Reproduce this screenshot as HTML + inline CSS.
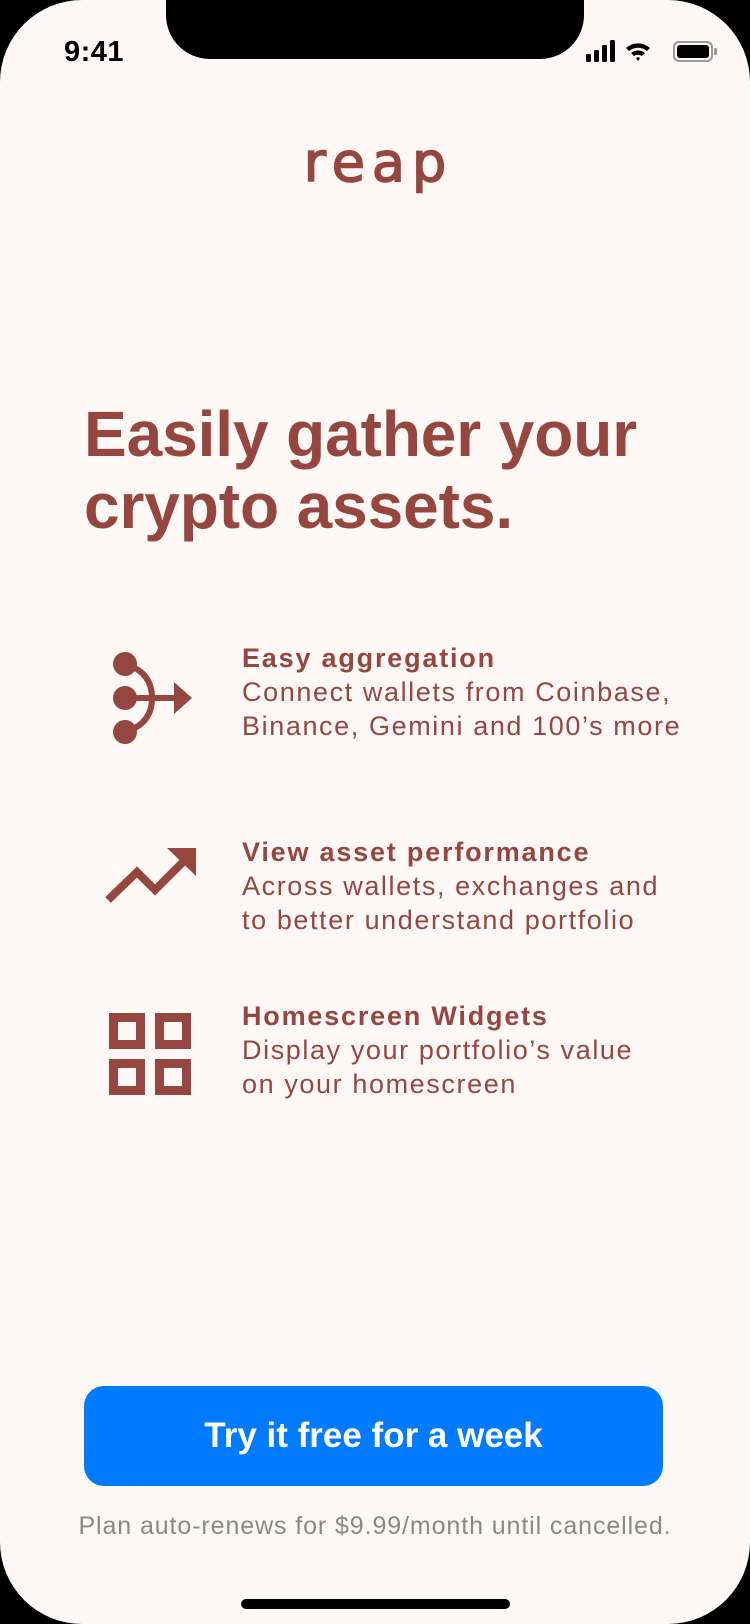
<!DOCTYPE html>
<html><head><meta charset="utf-8"><style>
html,body{margin:0;padding:0;background:#000;}
body{width:750px;height:1624px;position:relative;overflow:hidden;font-family:"Liberation Sans",sans-serif;}
.screen{position:absolute;left:0;top:0;width:750px;height:1624px;background:#fdf8f6;border-radius:82px;}
.notch{position:absolute;left:166px;top:0;width:418px;height:59px;background:#000;border-radius:0 0 44px 44px;}
.time{position:absolute;left:64px;top:36px;font-size:29px;font-weight:bold;color:#000;letter-spacing:0.5px;}
.c{color:#95463f;}
.logo{position:absolute;left:0;width:750px;top:128px;line-height:70px;height:70px;text-align:center;font-family:"DejaVu Sans",sans-serif;font-size:54px;letter-spacing:7px;text-indent:7px;-webkit-text-stroke:1.6px #95463f;}
h1{position:absolute;left:84px;top:398px;margin:0;font-size:64px;line-height:72px;font-weight:bold;letter-spacing:-0.1px;}
.f{position:absolute;left:242px;font-size:27px;line-height:34px;letter-spacing:1.6px;}
.f b{letter-spacing:1.8px;}
.ic{position:absolute;}
.btn{position:absolute;left:84px;top:1386px;width:579px;height:100px;background:#007aff;border-radius:20px;color:#fff;font-weight:bold;font-size:35px;text-align:center;line-height:100px;}
.foot{position:absolute;left:0;width:750px;top:1512px;text-align:center;color:#888;font-size:25px;letter-spacing:0.9px;}
.home{position:absolute;left:241px;top:1599px;width:269px;height:10px;border-radius:5px;background:#000;}
</style></head><body>
<div class="screen">
<div class="notch"></div>
<div class="time">9:41</div>
<svg style="position:absolute;left:586px;top:40px" width="134" height="24" viewBox="0 0 134 24">
<rect x="0" y="14" width="5" height="8" rx="1.5"/><rect x="8" y="10" width="5" height="12" rx="1.5"/><rect x="16" y="5" width="5" height="17" rx="1.5"/><rect x="24" y="0" width="5" height="22" rx="1.5"/>
<path d="M40 8 A18 18 0 0 1 64 8 L61 11 A14 14 0 0 0 43 11Z M45 13 A11 11 0 0 1 59 13 L56 16 A7 7 0 0 0 48 16Z M50 18 L52 21 L54 18 A3 3 0 0 0 50 18Z"/>
<rect x="88" y="2" width="38" height="19" rx="5" fill="none" stroke="#999" stroke-width="2"/><rect x="91" y="5" width="32" height="13" rx="3"/><rect x="128" y="8" width="3" height="7" rx="1" fill="#999"/>
</svg>
<div class="logo c">reap</div>
<h1 class="c">Easily gather your<br>crypto assets.</h1>

<svg class="ic" style="left:112px;top:652px" width="86" height="92" viewBox="0 0 86 92" fill="#95463f" stroke="#95463f">
<circle cx="13" cy="12" r="12" stroke="none"/><circle cx="13" cy="46" r="12" stroke="none"/><circle cx="13" cy="80" r="12" stroke="none"/>
<path d="M13 12 Q40 20 40 46 Q40 72 13 80" fill="none" stroke-width="6"/>
<path d="M13 46 H66" stroke-width="6"/>
<path d="M62 30 L80 46 L62 62Z" stroke="none"/>
</svg>

<svg class="ic" style="left:104px;top:848px" width="92" height="56" viewBox="0 0 92 56" fill="#95463f">
<path d="M4 52 L33 24 L51 42 L79 14" fill="none" stroke="#95463f" stroke-width="8"/>
<path d="M63 0 H92 V28Z"/>
</svg>

<svg class="ic" style="left:109px;top:1013px" width="82" height="82" viewBox="0 0 82 82" fill="none" stroke="#95463f" stroke-width="9">
<rect x="4.5" y="4.5" width="27" height="27"/><rect x="50.5" y="4.5" width="27" height="27"/><rect x="4.5" y="50.5" width="27" height="27"/><rect x="50.5" y="50.5" width="27" height="27"/>
</svg>

<div class="f c" style="top:641px"><b>Easy aggregation</b><br>Connect wallets from Coinbase,<br>Binance, Gemini and 100’s more</div>
<div class="f c" style="top:835px"><b>View asset performance</b><br>Across wallets, exchanges and<br>to better understand portfolio</div>
<div class="f c" style="top:999px"><b>Homescreen Widgets</b><br>Display your portfolio’s value<br>on your homescreen</div>

<div class="btn">Try it free for a week</div>
<div class="foot">Plan auto-renews for $9.99/month until cancelled.</div>
<div class="home"></div>
</div>
</body></html>
